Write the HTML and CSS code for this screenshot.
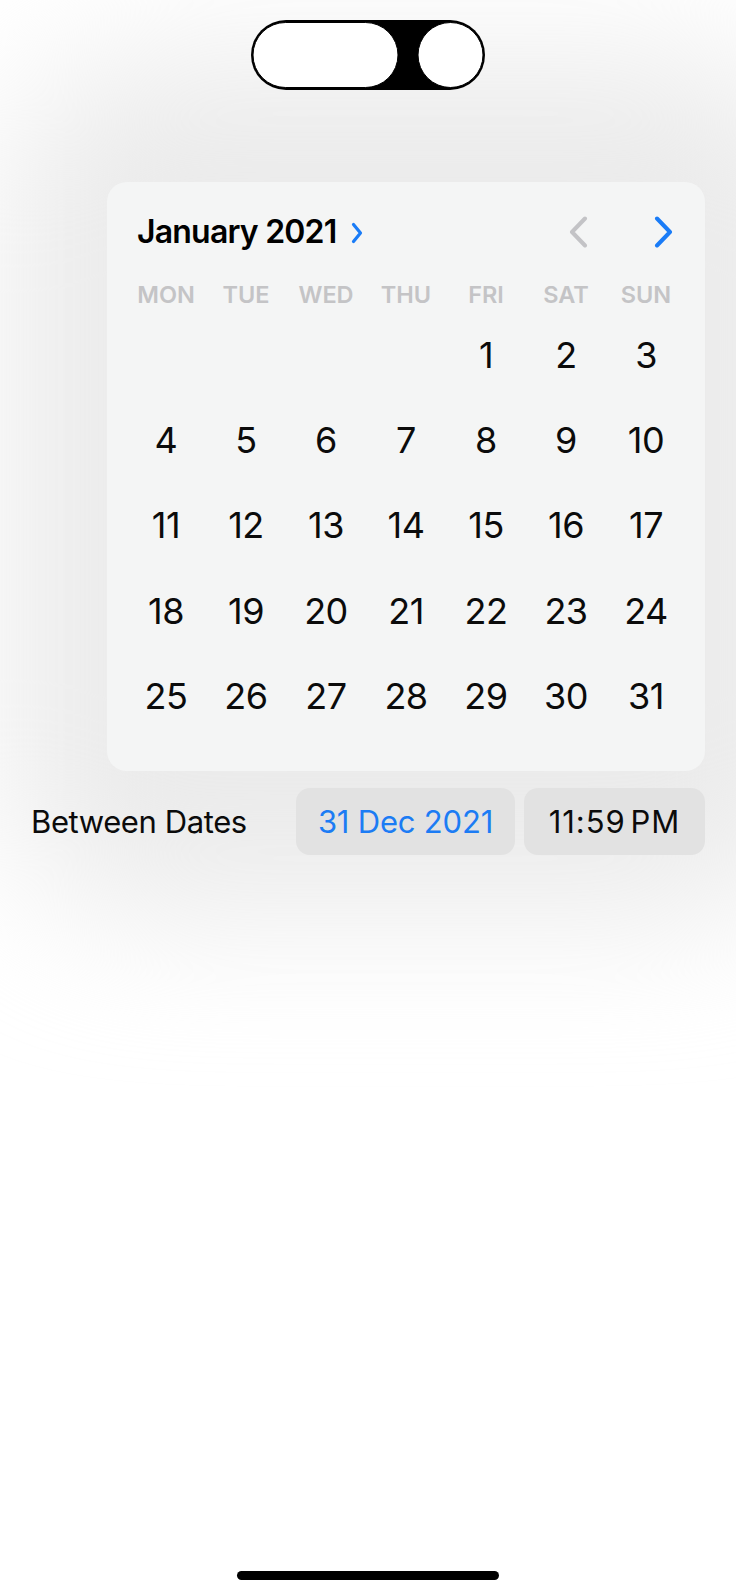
FILE: index.html
```html
<!DOCTYPE html>
<html lang="en">
<head>
<meta charset="utf-8">
<title>Date Picker</title>
<link rel="stylesheet" href="styles.css">
</head>
<body>
<div class="screen">
  <div class="island">
    <svg width="236" height="72" viewBox="0 0 236 72">
      <rect x="1" y="1" width="234" height="70" rx="35" fill="#000"/>
      <rect x="3" y="3.5" width="145" height="65" rx="32.5" fill="#fff" stroke="#000" stroke-width="1"/>
      <circle cx="200.5" cy="36" r="32.5" fill="#fff" stroke="#000" stroke-width="1"/>
    </svg>
  </div>

  <main class="main">
    <section class="card">
      <header class="cal-head">
        <div class="month">
          <span class="month-title">January 2021</span>
          <svg class="month-chev" width="12" height="22" viewBox="0 0 12 22"><path d="M2.5 2.5 L9.5 11 L2.5 19.5" fill="none" stroke="#1a7cf7" stroke-width="3.2" stroke-linecap="round" stroke-linejoin="round"/></svg>
        </div>
        <div class="nav">
          <svg width="20" height="32" viewBox="0 0 20 32"><path d="M17 2.5 L4 16 L17 29.5" fill="none" stroke="#c3c3c6" stroke-width="4" stroke-linecap="round" stroke-linejoin="round"/></svg>
          <svg width="20" height="32" viewBox="0 0 20 32"><path d="M3 2.5 L16 16 L3 29.5" fill="none" stroke="#1a7cf7" stroke-width="4" stroke-linecap="round" stroke-linejoin="round"/></svg>
        </div>
      </header>
      <div class="weekdays">
        <span>MON</span><span>TUE</span><span>WED</span><span>THU</span><span>FRI</span><span>SAT</span><span>SUN</span>
      </div>
      <div class="days">
        <span></span><span></span><span></span><span></span><span>1</span><span>2</span><span>3</span>
        <span>4</span><span>5</span><span>6</span><span>7</span><span>8</span><span>9</span><span>10</span>
        <span>11</span><span>12</span><span>13</span><span>14</span><span>15</span><span>16</span><span>17</span>
        <span>18</span><span>19</span><span>20</span><span>21</span><span>22</span><span>23</span><span>24</span>
        <span>25</span><span>26</span><span>27</span><span>28</span><span>29</span><span>30</span><span>31</span>
      </div>
    </section>

    <div class="row">
      <span class="label">Between Dates</span>
      <div class="pickers">
        <span class="pill pill-date">31 Dec 2021</span>
        <span class="pill pill-time">11:59<span class="thin"></span>PM</span>
      </div>
    </div>
  </main>

  <div class="home"></div>
</div>
</body>
</html>
```

FILE: styles.css
```css
html, body {
  margin: 0;
  padding: 0;
  overflow: hidden;
  background: #fff;
}

body {
  font-family: "Inter", "Roboto", "Liberation Sans", sans-serif;
  color: #000;
}

.screen {
  position: relative;
  width: 736px;
  height: 1596px;
  display: flex;
  flex-direction: column;
  overflow: hidden;
}

.island {
  display: flex;
  justify-content: center;
  margin-top: 19px;
  height: 72px;
  position: relative;
  z-index: 2;
}

.main {
  position: relative;
  margin-top: 91px;
  padding: 0 31px;
  display: flex;
  flex-direction: column;
}

.main::before {
  content: "";
  position: absolute;
  top: -125px;
  bottom: -60px;
  left: 5px;
  right: -90px;
  background: #ebebeb;
  border-radius: 140px;
  filter: blur(72px);
  z-index: 0;
}

.card {
  position: relative;
  z-index: 1;
  margin-left: 76px;
  width: 598px;
  height: 589px;
  box-sizing: border-box;
  padding: 18px 19px 0;
  background: #f4f5f5;
  border-radius: 20px;
}

.cal-head {
  height: 64px;
  display: flex;
  align-items: center;
  justify-content: space-between;
  padding: 0 12px 0 11px;
}

.month {
  display: flex;
  align-items: center;
  gap: 15px;
}

.month-title {
  font-size: 32px;
  font-weight: 600;
  letter-spacing: -0.8px;
  line-height: 1;
}

.month-chev {
  margin-top: 1px;
}

.nav {
  display: flex;
  align-items: center;
  gap: 66px;
}

.nav svg {
  display: block;
}

.weekdays {
  margin-top: 16px;
  height: 30px;
  display: grid;
  grid-template-columns: repeat(7, 80px);
  align-items: center;
}

.weekdays span {
  text-align: center;
  font-size: 23.5px;
  font-weight: 600;
  color: #c4c4c6;
  line-height: 30px;
}

.days {
  margin-top: 2px;
  display: grid;
  grid-template-columns: repeat(7, 80px);
  grid-auto-rows: 85.4px;
  align-items: center;
}

.days span {
  text-align: center;
  font-size: 36px;
  font-weight: 400;
  letter-spacing: -0.5px;
  line-height: 1;
  color: #0b0b0b;
}

.row {
  position: relative;
  z-index: 1;
  margin-top: 17px;
  height: 67px;
  display: flex;
  align-items: center;
  justify-content: space-between;
}

.label {
  font-size: 31px;
  letter-spacing: -0.4px;
  color: #0b0b0b;
}

.pickers {
  display: flex;
  gap: 9px;
  height: 67px;
}

.pill {
  display: flex;
  align-items: center;
  justify-content: center;
  height: 67px;
  border-radius: 14px;
  background: #e2e2e2;
  font-size: 31px;
  letter-spacing: -0.2px;
}

.pill-date {
  width: 219px;
  color: #1c7cf4;
}

.pill-time {
  width: 181px;
  color: #0b0b0b;
  letter-spacing: 0.9px;
}

.thin {
  display: inline-block;
  width: 5px;
}

.home {
  margin-top: auto;
  margin-bottom: 16px;
  align-self: center;
  width: 262px;
  height: 9px;
  border-radius: 5px;
  background: #000;
}
```
